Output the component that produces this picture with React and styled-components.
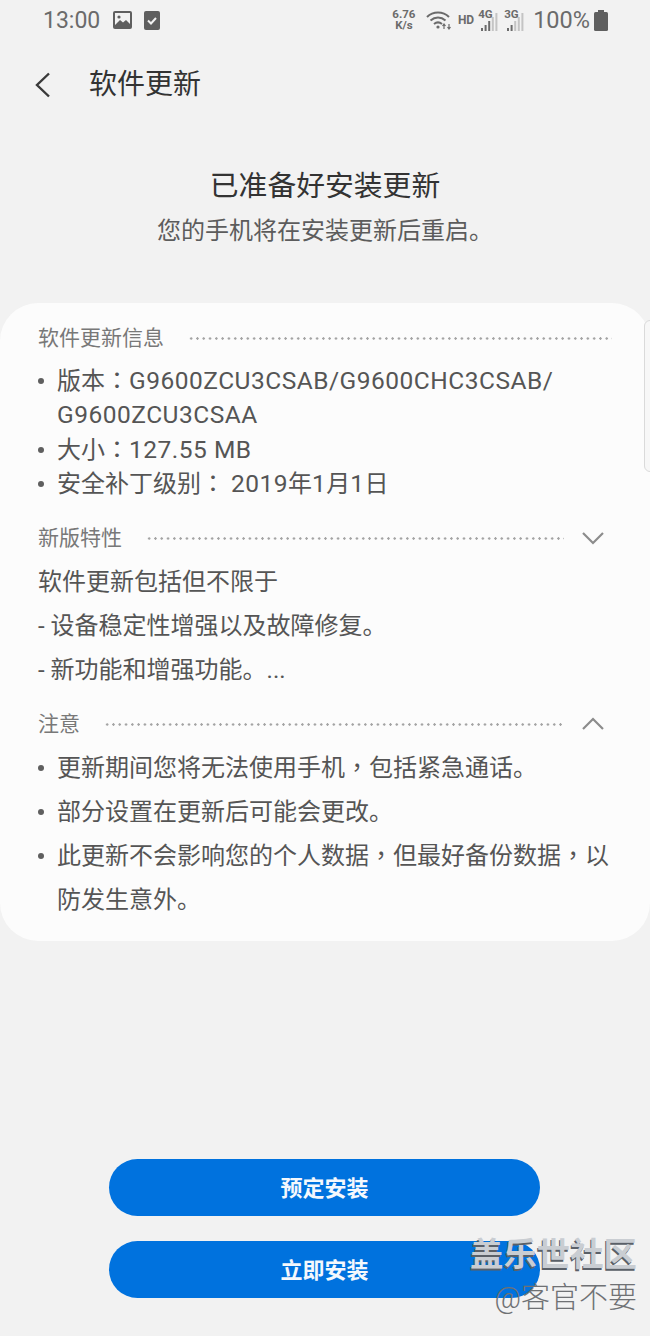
import styled, { createGlobalStyle } from 'styled-components';

const GlobalStyle = createGlobalStyle`
  html, body {
    margin: 0;
    padding: 0;
    background: #f2f2f2;
  }
  * {
    box-sizing: border-box;
  }
`;

const Screen = styled.div`
  width: 650px;
  height: 1336px;
  position: relative;
  overflow: hidden;
  background: #f2f2f2;
  font-family: Roboto, 'Noto Sans CJK SC', sans-serif;
  color: #555;
  display: flex;
  flex-direction: column;
`;

const StatusBar = styled.div`
  height: 40px;
  padding: 0 42px 0 43px;
  display: flex;
  align-items: center;
  justify-content: space-between;
  color: #6b6b6b;
`;

const StatusGroup = styled.div`
  display: flex;
  align-items: center;
  gap: ${(p) => p.$gap || 0}px;
`;

const Clock = styled.span`
  font-size: 23px;
  margin-right: 1px;
`;

const Speed = styled.span`
  font-size: 11.5px;
  font-weight: 700;
  line-height: 11px;
  text-align: center;
  width: 26px;
`;

const Tiny = styled.span`
  font-size: 12px;
  font-weight: 700;
  margin-left: 2px;
`;

const Battery = styled.span`
  font-size: 23.5px;
  margin-left: 3px;
`;

const SignalWrap = styled.div`
  position: relative;
  width: 22px;
  height: 24px;
`;

const SignalLabel = styled.span`
  position: absolute;
  left: 0;
  top: 0;
  font-size: 11.5px;
  font-weight: 700;
  line-height: 12px;
`;

const AppBar = styled.div`
  height: 90px;
  padding: 0 0 0 34px;
  display: flex;
  align-items: center;
  gap: 37px;
`;

const AppTitle = styled.h1`
  margin: 0;
  font-size: 28px;
  font-weight: 400;
  line-height: 36px;
  color: #333;
`;

const Intro = styled.div`
  height: 173px;
  padding-top: 37px;
  text-align: center;
`;

const Headline = styled.h2`
  margin: 0;
  font-size: 28.8px;
  font-weight: 400;
  line-height: 38px;
  color: #333;
`;

const Subline = styled.p`
  margin: 10px 0 0;
  font-size: 24px;
  line-height: 32px;
  color: #5c5c5c;
`;

const Card = styled.section`
  height: 638px;
  background: #fcfcfc;
  border-radius: 38px;
  padding: 21px 40px 0 38px;
`;

const SectionHead = styled.div`
  display: flex;
  align-items: center;
  height: 28px;
  margin-top: ${(p) => p.$top || 0}px;
  margin-right: ${(p) => p.$right || 0}px;
`;

const SectionName = styled.h3`
  margin: 0;
  font-size: 21px;
  font-weight: 400;
  line-height: 28px;
  color: #787878;
  white-space: nowrap;
`;

const Dots = styled.div`
  flex: 1;
  height: 3px;
  margin-left: 24px;
  background-image: radial-gradient(circle, #a4a4a4 1.1px, transparent 1.4px);
  background-size: 6.3px 3px;
  background-repeat: repeat-x;
`;

const Chevron = styled.svg`
  width: 24px;
  height: 14px;
  margin-left: 17px;
  margin-right: 5px;
  flex-shrink: 0;
`;

const InfoList = styled.ul`
  margin: ${(p) => p.$top}px 0 0;
  padding: 0;
  list-style: none;
`;

const InfoItem = styled.li`
  position: relative;
  padding-left: 19px;
  font-size: 24px;
  line-height: ${(p) => p.$line || 34.3}px;
  white-space: pre-line;

  &::before {
    content: '';
    position: absolute;
    left: 0;
    top: ${(p) => ((p.$line || 34.3) - 6) / 2}px;
    width: 6px;
    height: 6px;
    border-radius: 50%;
    background: #5f5f5f;
  }
`;

const Plain = styled.p`
  margin: ${(p) => p.$top || 0}px 0 0;
  font-size: 24px;
  line-height: 34px;
`;

// centred full-width punctuation, as the phone's font draws it
const Mark = styled.span`
  font-family: 'Noto Sans CJK TC', sans-serif;
  line-height: 1;
`;

const Latin = styled.span`
  font-size: 24.5px;
  letter-spacing: 0.5px;
  line-height: 1;
`;

const Actions = styled.div`
  margin-top: 218px;
  display: flex;
  flex-direction: column;
  align-items: center;
  gap: 25px;
`;

const ActionButton = styled.button`
  width: 431px;
  height: 57px;
  margin-left: -1px;
  padding: 0 0 4px;
  border: 0;
  border-radius: 29px;
  background: #0072de;
  color: #f4f8fd;
  font-family: inherit;
  font-size: 22px;
  font-weight: 700;
`;

const ScrollThumb = styled.div`
  position: absolute;
  right: -6px;
  top: 320px;
  width: 12px;
  height: 152px;
  border: 1px solid #dadada;
  border-radius: 6px;
  background: #f7f7f7;
`;

const Watermark = styled.div`
  position: absolute;
  right: 13px;
  top: 1235px;
  text-align: right;
`;

const WatermarkTitle = styled.div`
  font-size: 33.4px;
  font-weight: 700;
  line-height: 40px;
  color: #c9cdd2;
  text-shadow: -1px 2px 0 #5a6068;
`;

const WatermarkUser = styled.div`
  margin-top: 6px;
  font-size: 29px;
  font-weight: 300;
  line-height: 34px;
  color: #6f7174;
`;

function Bars({ filled }) {
  const bars = [3, 6, 10, 14, 18];
  return (
    <svg width="22" height="24" viewBox="0 0 22 24" style={{ position: 'absolute', left: 0, top: 0 }}>
      {bars.map((h, i) => (
        <rect
          key={i}
          x={3 + i * 3.6}
          y={23 - h}
          width="2"
          height={h}
          fill={i < filled ? '#6b6b6b' : '#c4c4c4'}
        />
      ))}
    </svg>
  );
}

export default function App() {
  return (
    <Screen>
      <GlobalStyle />
      <StatusBar>
        <StatusGroup $gap={12}>
          <Clock>13:00</Clock>
          <svg width="19" height="18" viewBox="0 0 19 18">
            <rect width="19" height="18" rx="2" fill="#5f5f5f" />
            <rect x="2" y="2" width="15" height="14" fill="#f2f2f2" />
            <circle cx="6" cy="6" r="1.6" fill="#5f5f5f" />
            <path d="M2 14 L7 9 L10 11.5 L13 9 L17 13 V16 H2 Z" fill="#5f5f5f" />
          </svg>
          <svg width="16" height="19" viewBox="0 0 16 19">
            <rect width="16" height="19" rx="2" fill="#5f5f5f" />
            <path d="M4 9.5 L7 12.5 L12 7" fill="none" stroke="#f2f2f2" strokeWidth="2" />
          </svg>
        </StatusGroup>
        <StatusGroup $gap={4}>
          <Speed>
            6.76
            <br />
            K/s
          </Speed>
          <svg width="26" height="20" viewBox="0 0 26 20" style={{ marginLeft: 5 }}>
            <g fill="none" stroke="#6b6b6b" strokeWidth="2">
              <path d="M1 7 C7 1 17 1 23 7" />
              <path d="M4.5 10.5 C9 6.5 15 6.5 19.5 10.5" />
              <path d="M8 14 C10.5 12 13.5 12 16 14" />
            </g>
            <circle cx="12" cy="17" r="1.6" fill="#6b6b6b" />
            <path d="M18 19 V14 M16.5 16 L18 14 L19.5 16 M23 14 V19 M21.5 17 L23 19 L24.5 17" stroke="#6b6b6b" strokeWidth="1.2" fill="none" />
          </svg>
          <Tiny>HD</Tiny>
          <SignalWrap>
            <Bars filled={3} />
            <SignalLabel>4G</SignalLabel>
          </SignalWrap>
          <SignalWrap>
            <Bars filled={2} />
            <SignalLabel>3G</SignalLabel>
          </SignalWrap>
          <Battery>100%</Battery>
          <svg width="14" height="21" viewBox="0 0 14 21">
            <rect x="4" width="6" height="3" fill="#5f5f5f" />
            <rect y="2" width="14" height="19" rx="1.5" fill="#5f5f5f" />
          </svg>
        </StatusGroup>
      </StatusBar>

      <AppBar>
        <svg width="18" height="26" viewBox="0 0 18 26">
          <path d="M15 1.5 L3 13 L15 24.5" fill="none" stroke="#3a3a3a" strokeWidth="2.4" />
        </svg>
        <AppTitle>软件更新</AppTitle>
      </AppBar>

      <Intro>
        <Headline>已准备好安装更新</Headline>
        <Subline>您的手机将在安装更新后重启。</Subline>
      </Intro>

      <Card>
        <SectionHead $right={-2}>
          <SectionName>软件更新信息</SectionName>
          <Dots />
        </SectionHead>
        <InfoList $top={12}>
          <InfoItem>
            版本<Mark>：</Mark>
            <Latin>G9600ZCU3CSAB/G9600CHC3CSAB/{'\n'}G9600ZCU3CSAA</Latin>
          </InfoItem>
          <InfoItem>
            大小<Mark>：</Mark>
            <Latin>127.55 MB</Latin>
          </InfoItem>
          <InfoItem>
            安全补丁级别<Mark>：</Mark> <Latin>2019</Latin>年<Latin>1</Latin>月<Latin>1</Latin>日
          </InfoItem>
        </InfoList>

        <SectionHead $top={23}>
          <SectionName>新版特性</SectionName>
          <Dots />
          <Chevron viewBox="0 0 24 14">
            <path d="M2 2 L12 12 L22 2" fill="none" stroke="#8c8c8c" strokeWidth="2.2" />
          </Chevron>
        </SectionHead>
        <Plain $top={13}>软件更新包括但不限于</Plain>
        <Plain $top={10}>- 设备稳定性增强以及故障修复。</Plain>
        <Plain $top={10}>- 新功能和增强功能。...</Plain>

        <SectionHead $top={23}>
          <SectionName>注意</SectionName>
          <Dots />
          <Chevron viewBox="0 0 24 14">
            <path d="M2 12 L12 2 L22 12" fill="none" stroke="#8c8c8c" strokeWidth="2.2" />
          </Chevron>
        </SectionHead>
        <InfoList $top={8}>
          <InfoItem $line={44}>
            更新期间您将无法使用手机<Mark>，</Mark>包括紧急通话。
          </InfoItem>
          <InfoItem $line={44}>部分设置在更新后可能会更改。</InfoItem>
          <InfoItem $line={44}>
            此更新不会影响您的个人数据<Mark>，</Mark>但最好备份数据<Mark>，</Mark>以防发生意外。
          </InfoItem>
        </InfoList>
      </Card>

      <Actions>
        <ActionButton>预定安装</ActionButton>
        <ActionButton>立即安装</ActionButton>
      </Actions>

      <ScrollThumb />
      <Watermark>
        <WatermarkTitle>盖乐世社区</WatermarkTitle>
        <WatermarkUser>@客官不要</WatermarkUser>
      </Watermark>
    </Screen>
  );
}
